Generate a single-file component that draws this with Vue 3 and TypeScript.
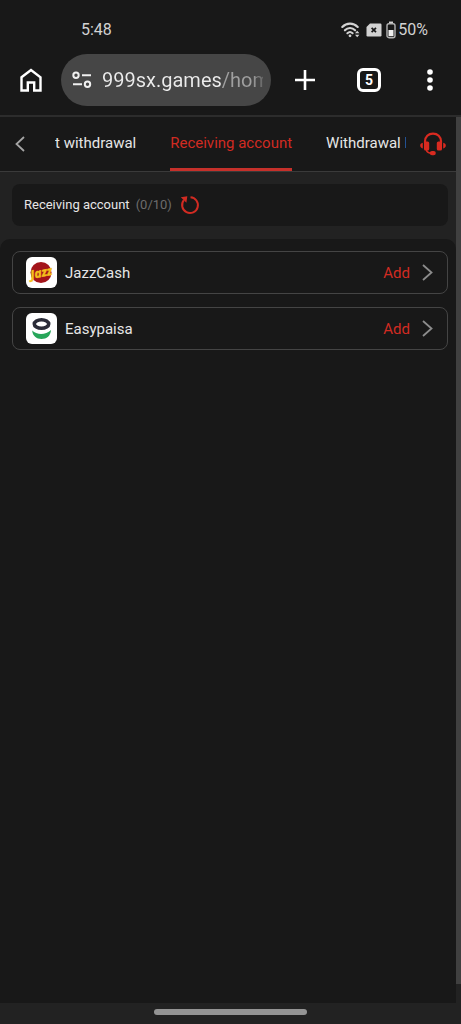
<script setup lang="ts">
import { ref } from 'vue'

interface Method {
  id: string
  name: string
}

const address = ref('999sx.games/home')
const tabs: string[] = ['t withdrawal', 'Receiving account', 'Withdrawal I']
const active = ref(1)
const methods: Method[] = [
  { id: 'jazz', name: 'JazzCash' },
  { id: 'easypaisa', name: 'Easypaisa' },
]
</script>

<template>
  <div class="screen">
    <div class="status">
      <span class="clock">5:48</span>
      <div class="status-icons">
        <svg class="wifi" width="20" height="16" viewBox="0 0 20 16" aria-hidden="true">
          <g fill="none" stroke="#d2d2d2" stroke-width="2.100" stroke-linecap="round">
            <path d="M1.300 5C5.600.5 12.400.5 16.700 5" />
            <path d="M3.900 8.300c2.900-3.100 7.300-3.100 10.200 0" />
            <path d="M6.400 11.200c1.600-1.500 3.600-1.500 5.200 0" />
          </g>
          <circle cx="9" cy="13.800" r="1.400" fill="#d2d2d2" />
          <path d="M14 11.300l2.200-2.500 2.200 2.500zM14 12.700l2.200 2.500 2.200-2.500z" fill="#d2d2d2" />
        </svg>
        <svg class="sim" width="16" height="14" viewBox="0 0 16 14" aria-hidden="true">
          <path d="M4 .5h10.300Q15.500.5 15.500 1.700v10.600q0 1.200-1.200 1.200H1.700Q.5 13.500.5 12.300V4z" fill="#d2d2d2" />
          <path d="M5.600 4.800l4.400 4.400M10 4.800L5.600 9.200" stroke="#181818" stroke-width="1.700" />
        </svg>
        <svg class="battery" width="10" height="18" viewBox="0 0 10 18" aria-hidden="true">
          <path d="M3 1.300h4" stroke="#d2d2d2" stroke-width="1.500" />
          <rect x="1" y="2.700" width="8" height="14" rx="2" fill="none" stroke="#b4b4b4" stroke-width="1.400" />
          <rect x="2.500" y="9" width="5" height="6.200" fill="#f0f0f0" />
        </svg>
        <span class="percent">50%</span>
      </div>
    </div>

    <div class="toolbar">
      <button class="icon-btn" type="button" aria-label="Home">
        <svg width="22" height="24" viewBox="0 0 22 24">
          <path d="M1.500 9.300L11 2l9.500 7.300v13.200h-6.300v-8H7.800v8H1.500z" fill="none" stroke="#fff" stroke-width="2.400" />
        </svg>
      </button>
      <div class="omnibox">
        <button class="icon-btn" type="button" aria-label="Site settings">
          <svg width="20" height="18" viewBox="0 0 20 18">
            <g fill="none" stroke="#f0f0f0" stroke-width="2">
              <circle cx="4" cy="4.200" r="2.700" />
              <path d="M10 4.200h9M1 13.200h9" />
              <circle cx="15.500" cy="13.200" r="2.700" />
            </g>
          </svg>
        </button>
        <input v-model="address" class="url" type="text" aria-label="Address" />
      </div>
      <div class="actions">
        <button class="icon-btn" type="button" aria-label="New tab">
          <svg width="22" height="22" viewBox="0 0 22 22">
            <path d="M11 1v20M1 11h20" stroke="#fff" stroke-width="2.600" />
          </svg>
        </button>
        <button class="icon-btn tab-count" type="button" aria-label="Tabs">5</button>
        <button class="icon-btn menu" type="button" aria-label="Menu">
          <svg width="8" height="22" viewBox="0 0 8 22" fill="#fff">
            <circle cx="4" cy="3" r="2.800" />
            <circle cx="4" cy="11" r="2.800" />
            <circle cx="4" cy="19" r="2.800" />
          </svg>
        </button>
      </div>
    </div>

    <main class="page">
      <header class="header">
        <button class="icon-btn back" type="button" aria-label="Back">
          <svg width="10" height="16" viewBox="0 0 10 16">
            <path d="M9 1L1.500 8 9 15" fill="none" stroke="#a5a5a5" stroke-width="1.800" />
          </svg>
        </button>
        <nav class="tabs">
          <button
            v-for="(tab, i) in tabs"
            :key="tab"
            type="button"
            class="tab"
            :class="{ active: i === active }"
            @click="active = i"
          >{{ tab }}</button>
        </nav>
        <button class="icon-btn support" type="button" aria-label="Support">
          <svg width="26" height="24" viewBox="0 0 26 24">
            <path d="M5 11V9.500C5 4.800 8.400 1.600 13 1.600S21 4.800 21 9.500V11" fill="none" stroke="#d92a20" stroke-width="2.200" />
            <rect x="4" y="9.500" width="5.200" height="9" rx="1.600" fill="#d92a20" />
            <rect x="16.800" y="9.500" width="5.200" height="9" rx="1.600" fill="#d92a20" />
            <path d="M2.800 10.800v5.600C1 16 .2 15 .2 13.600s.8-2.400 2.600-2.800zM23.200 10.800v5.600c1.800-.4 2.600-1.400 2.600-2.800s-.8-2.400-2.600-2.800z" fill="#d92a20" />
            <path d="M6.300 18c.8 2.200 2.400 3.200 5 3.200" fill="none" stroke="#d92a20" stroke-width="1.600" />
            <rect x="9.800" y="18.900" width="6" height="4.400" rx="2.200" fill="#d92a20" />
          </svg>
        </button>
      </header>

      <section class="summary">
        <h1 class="title">Receiving account</h1>
        <span class="count">(0/10)</span>
        <button class="icon-btn" type="button" aria-label="Refresh">
          <svg width="20" height="20" viewBox="0 0 20 20">
            <path d="M10.500 2.200A7.900 7.900 0 1 1 3.800 5.200" fill="none" stroke="#d12b22" stroke-width="2" />
            <path d="M.8 2.300L7.300 1.200 6.400 7.700z" fill="#d12b22" />
          </svg>
        </button>
      </section>

      <section class="list">
        <button v-for="m in methods" :key="m.id" class="row" type="button">
          <span class="logo">
            <svg v-if="m.id === 'jazz'" width="31" height="31" viewBox="0 0 31 31" aria-hidden="true">
              <circle cx="15" cy="15.500" r="10.500" fill="#a3151b" />
              <g transform="rotate(-12 15 15)">
                <text x="15" y="20" text-anchor="middle" class="jazz">Jazz</text>
              </g>
            </svg>
            <svg v-else width="31" height="31" viewBox="0 0 31 31" aria-hidden="true">
              <ellipse cx="15.500" cy="11" rx="7.200" ry="4.300" fill="none" stroke="#2b2c38" stroke-width="3.600" />
              <path d="M6.200 17.500c4.500 4.600 13.500 4.600 18.800-.5-.3 5.800-4.300 9-9.500 9-5 0-8.900-3-9.300-8.500z" fill="#27a65a" />
            </svg>
          </span>
          <span class="name">{{ m.name }}</span>
          <span class="add">Add</span>
          <svg width="11" height="17" viewBox="0 0 11 17" aria-hidden="true">
            <path d="M1 1l8.500 7.500L1 16" fill="none" stroke="#8c8c8c" stroke-width="1.800" />
          </svg>
        </button>
      </section>
      <div class="scrollbar"></div>
    </main>

    <footer class="gesture"><div class="pill"></div></footer>
  </div>
</template>

<style>
body {
  background: #181818;
}
</style>

<style scoped>
.screen {
  min-height: 100vh;
  display: flex;
  flex-direction: column;
  background: #181818;
  color: #e6e6e6;
  font-family: Roboto, "Liberation Sans", sans-serif;
}
.screen * {
  box-sizing: border-box;
}
button {
  margin: 0;
  padding: 0;
  border: 0;
  background: none;
  color: inherit;
  font: inherit;
  cursor: pointer;
}
svg {
  display: block;
  flex: none;
}
.icon-btn {
  display: flex;
  align-items: center;
  justify-content: center;
  flex: none;
}
.status {
  height: 44px;
  padding: 16px 33px 0 81px;
  display: flex;
  align-items: center;
  justify-content: space-between;
  font-size: 16px;
  line-height: 20px;
  color: #d2d2d2;
}
.status-icons {
  display: flex;
  align-items: center;
}
.sim {
  margin-left: 5px;
}
.battery {
  margin: 0 2px 0 4px;
}
.toolbar {
  height: 73px;
  padding: 0 23px 0 20px;
  display: flex;
  align-items: center;
  border-bottom: 2px solid #2c2c2c;
}
.omnibox {
  flex: 1;
  min-width: 0;
  height: 52px;
  margin-left: 19px;
  padding: 0 8px 0 11px;
  display: flex;
  align-items: center;
  gap: 10px;
  border-radius: 26px;
  background: #464646;
}
.url {
  flex: 1;
  min-width: 0;
  height: 32px;
  padding: 0;
  border: 0;
  outline: 0;
  font: 20px/32px Roboto, "Liberation Sans", sans-serif;
  color: transparent;
  background: linear-gradient(90deg, #ececec 120px, #a0a0a0 120px, #a0a0a0 150px, #606060 162px);
  background-clip: text;
  -webkit-background-clip: text;
}
.actions {
  margin-left: 23px;
  display: flex;
  align-items: center;
  gap: 41px;
}
.menu {
  width: 16px;
}
.tab-count {
  width: 24px;
  height: 24px;
  border: 3px solid #fff;
  border-radius: 6px;
  color: #fff;
  font-size: 14px;
  line-height: 18px;
  font-weight: 700;
}
.page {
  position: relative;
  flex: 1;
  padding-right: 5px;
  display: flex;
  flex-direction: column;
  background: #222;
}
.header {
  height: 54px;
  display: flex;
  align-items: stretch;
  padding: 0 10px 0 15px;
  background: #181818;
  box-shadow: 0 1px 0 #3a3a3a;
}
.tabs {
  flex: 1;
  min-width: 0;
  margin: 0 14px 0 30px;
  display: flex;
  gap: 34px;
  overflow: hidden;
}
.tab {
  flex: none;
  border-bottom: 3px solid transparent;
  font-size: 15px;
  line-height: 20px;
  white-space: nowrap;
}
.tab.active {
  color: #d12b22;
  border-color: #c6302a;
}
.summary {
  height: 42px;
  margin: 13px 8px 0 12px;
  padding: 0 12px;
  display: flex;
  align-items: center;
  border-radius: 8px;
  background: #181818;
}
.title {
  margin: 0;
  font-size: 13px;
  line-height: 20px;
  font-weight: 400;
}
.count {
  margin: 0 8px 0 6px;
  font-size: 13px;
  line-height: 20px;
  color: #6c6c6c;
}
.list {
  flex: 1;
  margin-top: 13px;
  padding: 12px 8px 12px 12px;
  display: flex;
  flex-direction: column;
  gap: 13px;
  border-radius: 10px 10px 0 0;
  background: #181818;
}
.row {
  height: 43px;
  padding: 0 14px 0 13px;
  display: flex;
  align-items: center;
  border: 1px solid #444;
  border-radius: 8px;
  font-size: 15px;
  line-height: 20px;
}
.logo {
  border-radius: 6px;
  background: #fff;
  overflow: hidden;
}
.jazz {
  font: italic 700 12px "Open Sans", sans-serif;
  fill: #f5c21b;
  stroke: #f5c21b;
  stroke-width: 0.5px;
}
.name {
  flex: 1;
  margin-left: 8px;
  text-align: left;
}
.add {
  margin-right: 12px;
  color: #d12b22;
}
.scrollbar {
  position: absolute;
  top: 0;
  right: 0;
  bottom: 19px;
  width: 5px;
  background: #404040;
}
.gesture {
  height: 21px;
  padding-top: 6px;
  background: #222;
}
.pill {
  width: 33.3%;
  height: 6px;
  margin: 0 auto;
  border-radius: 3px;
  background: #949494;
}
</style>
